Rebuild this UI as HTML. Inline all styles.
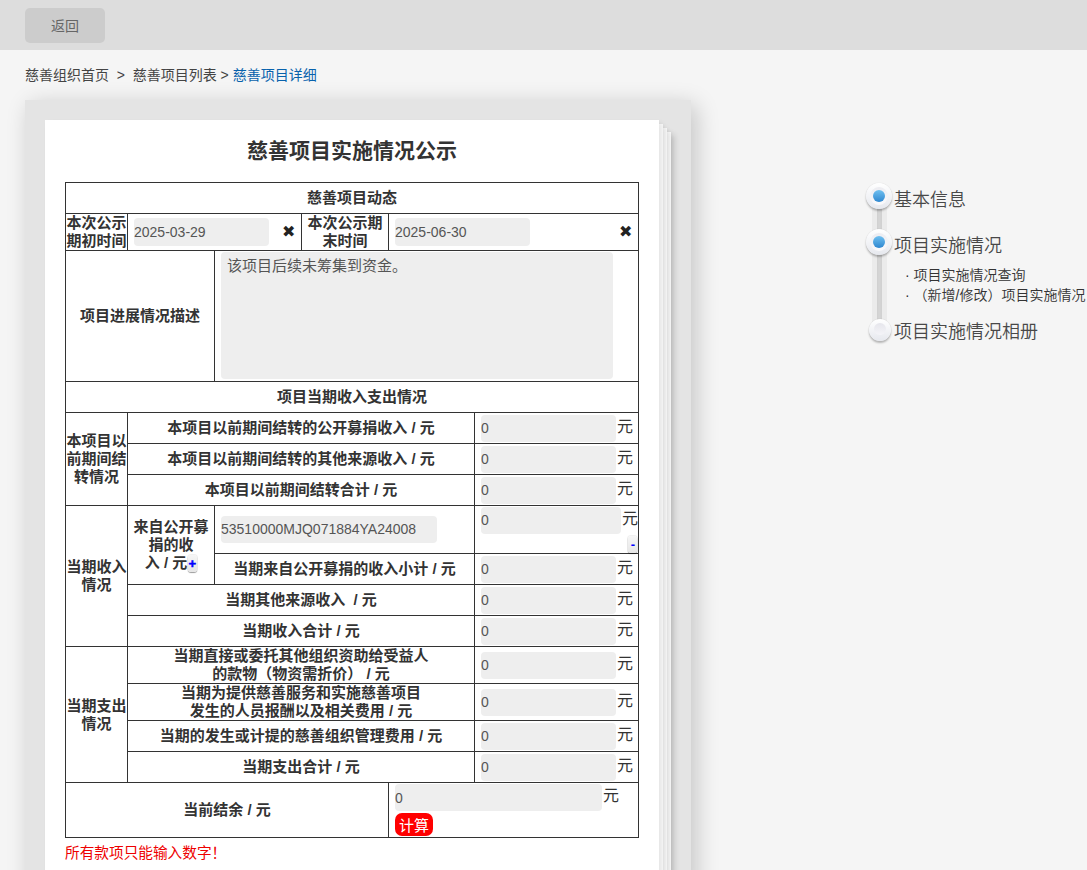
<!DOCTYPE html>
<html lang="zh-CN">
<head>
<meta charset="utf-8">
<title>慈善项目详细</title>
<style>
*{box-sizing:border-box;}
html,body{margin:0;padding:0;}
body{width:1087px;height:870px;overflow:hidden;background:#f5f5f5;position:relative;
  font-family:"Liberation Sans","Noto Sans CJK SC",sans-serif;color:#333;font-size:14px;}
.topbar{position:absolute;left:0;top:0;width:1087px;height:50px;background:#ddd;}
.back{position:absolute;left:25px;top:8px;width:80px;height:35px;border-radius:5px;background:#ccc;
  color:#666;font-size:14px;line-height:37px;text-align:center;}
.crumb{position:absolute;left:25px;top:64px;height:22px;line-height:22px;font-size:14px;color:#444;white-space:nowrap;}
.crumb .cur{color:#0862ac;}
.card{position:absolute;left:25px;top:100px;width:666px;height:790px;background:#e4e4e4;
  box-shadow:5px 5px 22px rgba(0,0,0,.2);}
.pg{position:absolute;background:#fbfbfb;height:800px;width:614px;}
.pg4{left:57px;top:132px;box-shadow:3px 3px 6px rgba(0,0,0,.17);}
.pg3{left:53px;top:128px;box-shadow:3px 3px 5px rgba(0,0,0,.09);}
.pg2{left:49px;top:124px;box-shadow:3px 3px 5px rgba(0,0,0,.09);}
.paper{position:absolute;left:45px;top:120px;width:614px;height:800px;background:#fff;box-shadow:3px 3px 5px rgba(0,0,0,.09);}
h1{position:absolute;left:0;top:16px;width:614px;margin:0;text-align:center;font-size:21px;line-height:30px;font-weight:bold;color:#333;}
table{position:absolute;left:20px;top:62px;width:573px;border-collapse:collapse;table-layout:fixed;}
td{border:1px solid #333;padding:0;text-align:center;vertical-align:middle;font-weight:bold;font-size:15px;line-height:18px;color:#333;}
td.v{text-align:left;font-weight:normal;white-space:nowrap;}
.in{display:inline-block;vertical-align:middle;background:#eee;border-radius:4px;height:27px;line-height:26px;
  font-size:14px;color:#555;padding-left:0;font-weight:normal;text-align:left;}
.yuan{display:inline-block;vertical-align:middle;font-size:16px;font-weight:normal;color:#333;}
.in.n{width:135px;margin-left:6px;}
.in.n+.yuan{margin-left:1px;margin-top:-2px;}
.x{display:inline-block;vertical-align:middle;font-size:16px;color:#222;margin-left:13px;font-weight:normal;}
.x.x2{margin-left:89px;}
.ta{margin:1px 0 0 6px;width:392px;height:127px;background:#eee;border-radius:4px;font-size:15px;line-height:20px;color:#555;padding:4px 6px;white-space:normal;}
.plus,.minus{display:inline-block;width:9px;height:17px;border-radius:3px;background:linear-gradient(#f6f6f6,#e6e6e6);box-shadow:0 1px 1px rgba(0,0,0,.35),0 0 0 1px rgba(0,0,0,.06);color:#00f;font-size:13px;line-height:17px;text-align:center;font-weight:bold;vertical-align:middle;overflow:hidden;}
.plus{margin-left:1px;position:relative;top:-1px;text-indent:-1px;-webkit-text-stroke:0.5px #00f;}
.minus{position:absolute;left:153px;top:30px;line-height:18px;text-indent:1px;}
.calc{position:absolute;left:6px;top:30px;width:38px;height:23px;border-radius:7px;background:#f00;color:#fff;font-size:15px;line-height:25px;text-align:center;font-weight:normal;}
.tip{position:absolute;left:20px;top:723px;font-size:14.67px;line-height:20px;color:#e00;}
.vline{position:absolute;left:872px;top:196px;width:15px;height:134px;background:#ebebeb;}
.vline:after{content:"";position:absolute;left:5px;top:0;width:5px;height:134px;background:linear-gradient(90deg,#cfcfcf,#d6d6d6 40%,#d0d0d0);}
.dot{position:absolute;width:26px;height:26px;border-radius:50%;background:linear-gradient(#fff,#e6e8ee);box-shadow:0 2px 2px rgba(0,0,0,.25),0 0 1px rgba(0,0,0,.2);}
.dot i{position:absolute;left:4px;top:4px;width:18px;height:18px;border-radius:50%;background:linear-gradient(#ececf1,#fafafc);}
.dot b{position:absolute;left:7px;top:6.5px;width:12px;height:12px;border-radius:50%;background:linear-gradient(#6fc0f0,#2f87d0);}
.dot.off{width:22px;height:22px;}
.dot.off i{left:5px;top:4px;width:12px;height:12px;background:linear-gradient(#e6e6ec,#f4f4f8);}
.nt{position:absolute;left:894px;font-size:18px;line-height:26px;color:#484848;white-space:nowrap;font-weight:350;}
.ns{position:absolute;left:905px;font-size:14px;line-height:20px;color:#333;white-space:nowrap;font-weight:350;}
</style>
</head>
<body>
<div class="topbar"><div class="back">返回</div></div>
<div class="crumb">慈善组织首页&nbsp; &gt; &nbsp;慈善项目列表 &gt; <span class="cur">慈善项目详细</span></div>
<div class="card"></div>
<div class="pg pg4"></div><div class="pg pg3"></div><div class="pg pg2"></div>
<div class="paper">
<h1>慈善项目实施情况公示</h1>
<table>
<colgroup><col style="width:62px"><col style="width:87px"><col style="width:87px"><col style="width:87px"><col style="width:86px"><col style="width:164px"></colgroup>
<tr style="height:31px"><td colspan="6">慈善项目动态</td></tr>
<tr style="height:37px"><td>本次公示期初时间</td><td colspan="2" class="v dt"><span class="in" style="width:135px;margin-left:6px;height:28px;line-height:28px">2025-03-29</span><span class="x">✖</span></td><td>本次公示期末时间</td><td colspan="2" class="v dt"><span class="in" style="width:135px;margin-left:6px;height:28px;line-height:28px">2025-06-30</span><span class="x x2">✖</span></td></tr>
<tr style="height:131px"><td colspan="2">项目进展情况描述</td><td colspan="4" class="v" style="vertical-align:top"><div class="ta">该项目后续未筹集到资金。</div></td></tr>
<tr style="height:31px"><td colspan="6">项目当期收入支出情况</td></tr>
<tr style="height:31px"><td rowspan="3">本项目以前期间结转情况</td><td colspan="4">本项目以前期间结转的公开募捐收入 / 元</td><td class="v"><span class="in n">0</span><span class="yuan">元</span></td></tr>
<tr style="height:31px"><td colspan="4">本项目以前期间结转的其他来源收入 / 元</td><td class="v"><span class="in n">0</span><span class="yuan">元</span></td></tr>
<tr style="height:31px"><td colspan="4">本项目以前期间结转合计 / 元</td><td class="v"><span class="in n">0</span><span class="yuan">元</span></td></tr>
<tr style="height:48px"><td rowspan="4">当期收入情况</td><td rowspan="2" style="vertical-align:top;padding-top:12px">来自公开募<br>捐的收<br>入 / 元<span class="plus">+</span></td><td colspan="3" class="v"><span class="in" style="width:216px;margin-left:6px;height:27px;line-height:27px">53510000MJQ071884YA24008</span></td><td class="v" style="vertical-align:top;position:relative"><span class="in n" style="width:140px;margin-top:1px">0</span><span class="yuan" style="position:absolute;left:146px;top:6px">元</span><span class="minus">-</span></td></tr>
<tr style="height:31px"><td colspan="3">当期来自公开募捐的收入小计 / 元</td><td class="v"><span class="in n">0</span><span class="yuan">元</span></td></tr>
<tr style="height:31px"><td colspan="4">当期其他来源收入&nbsp; / 元</td><td class="v"><span class="in n">0</span><span class="yuan">元</span></td></tr>
<tr style="height:31px"><td colspan="4">当期收入合计 / 元</td><td class="v"><span class="in n">0</span><span class="yuan">元</span></td></tr>
<tr style="height:37px"><td rowspan="4">当期支出情况</td><td colspan="4">当期直接或委托其他组织资助给受益人<br>的款物（物资需折价） / 元</td><td class="v"><span class="in n">0</span><span class="yuan">元</span></td></tr>
<tr style="height:37px"><td colspan="4">当期为提供慈善服务和实施慈善项目<br>发生的人员报酬以及相关费用 / 元</td><td class="v"><span class="in n">0</span><span class="yuan">元</span></td></tr>
<tr style="height:31px"><td colspan="4">当期的发生或计提的慈善组织管理费用 / 元</td><td class="v"><span class="in n">0</span><span class="yuan">元</span></td></tr>
<tr style="height:31px"><td colspan="4">当期支出合计 / 元</td><td class="v"><span class="in n">0</span><span class="yuan">元</span></td></tr>
<tr style="height:55px"><td colspan="4">当前结余 / 元</td><td colspan="2" class="v" style="vertical-align:top"><div style="position:relative;height:54px"><span class="in" style="position:absolute;left:6px;top:1px;width:207px;line-height:29px">0</span><span class="yuan" style="position:absolute;left:214px;top:4px">元</span><span class="calc">计算</span></div></td></tr>
</table>
<div class="tip">所有款项只能输入数字！</div>
</div>
<div class="vline"></div>
<div class="dot" style="left:866px;top:183px"><i></i><b></b></div>
<div class="dot" style="left:866px;top:229px"><i></i><b></b></div>
<div class="dot off" style="left:869px;top:319px"><i></i></div>
<div class="nt" style="top:187px">基本信息</div>
<div class="nt" style="top:233px">项目实施情况</div>
<div class="ns" style="top:265px">· 项目实施情况查询</div>
<div class="ns" style="top:285px">· （新增/修改）项目实施情况</div>
<div class="nt" style="top:319px">项目实施情况相册</div>
</body>
</html>
